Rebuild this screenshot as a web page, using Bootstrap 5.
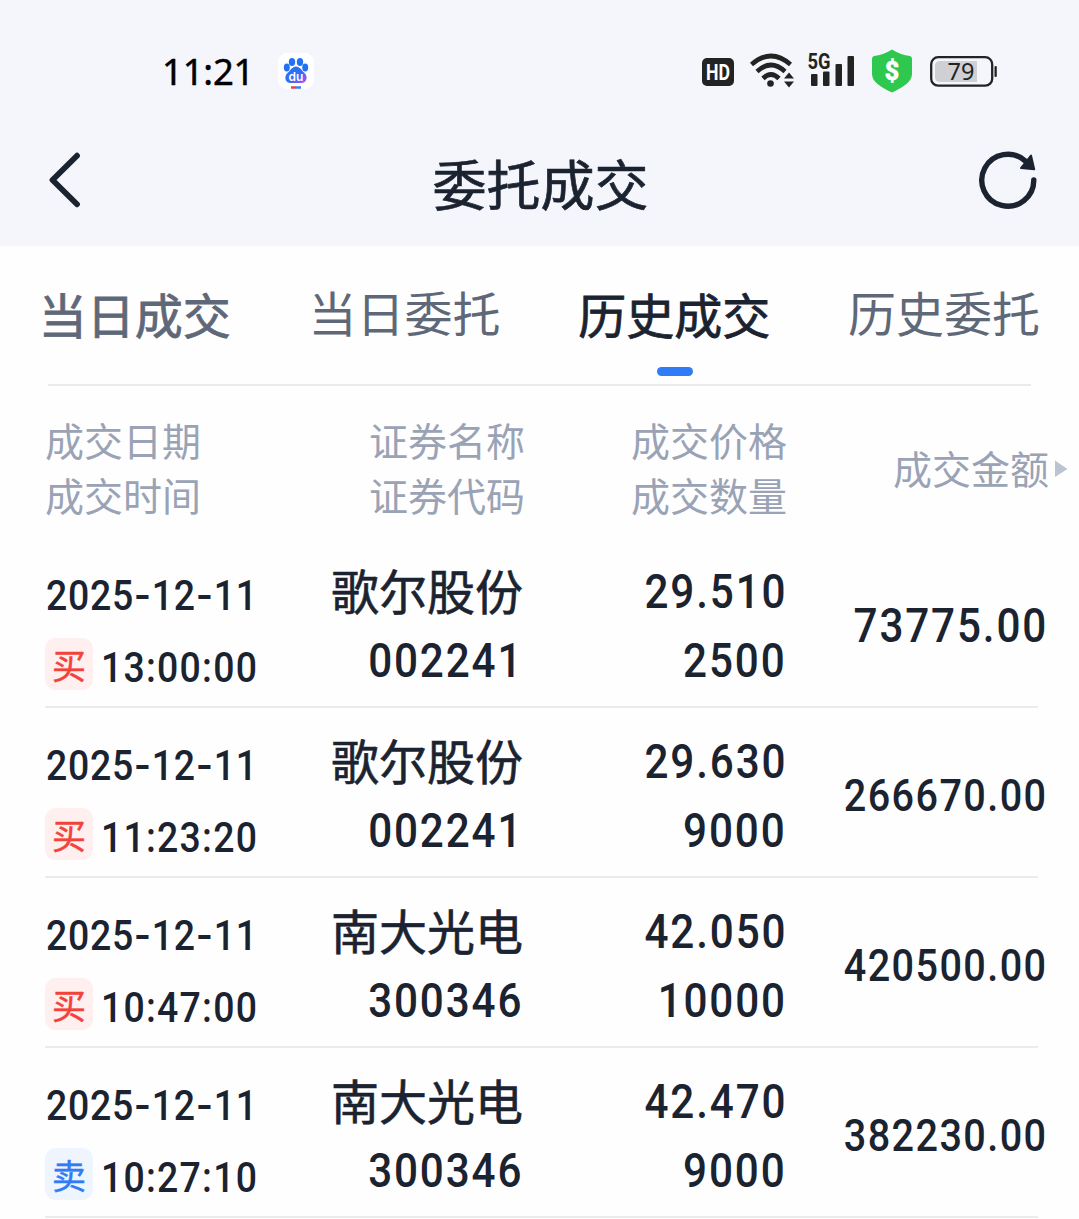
<!DOCTYPE html>
<html lang="zh-CN">
<head>
<meta charset="utf-8">
<meta name="viewport" content="width=device-width, initial-scale=1">
<title>委托成交</title>
<link href="https://cdn.jsdelivr.net/npm/bootstrap@5.3.0/dist/css/bootstrap.min.css" rel="stylesheet">
<style>
body{font-family:Roboto,"Noto Sans CJK SC",sans-serif;color:#1b2330;background:#fefefe;overflow:hidden}
.cjk{font-family:"Noto Sans CJK SC",sans-serif}
.topzone{background:#f4f6fb;height:246px}
.statusbar{height:120px;padding:22px 81px 0 162px}
.clock{font:400 36.5px/1 "Noto Sans",sans-serif;color:#000;letter-spacing:-.2px;width:116px;-webkit-text-stroke:.5px}
.appbar{height:126px;padding:0 41px 6px 48px}
.apptitle{font-size:54px;line-height:60px;font-weight:400;-webkit-text-stroke:.7px;padding-top:5px;margin-right:3px}
.tabs{height:140px}
.tabs .nav-link{height:138px;padding:31px 0 0;font-size:48px;line-height:68px;color:#5f6878;font-weight:400;white-space:nowrap}
.tabs .strong{padding-top:33px;-webkit-text-stroke:.8px}
.tabs .active{color:#1b2330}
.pill{width:36px;height:9px;border-radius:5px;background:#2f7cf6;margin:20px auto 0;position:relative;left:.5px}
.rule{height:2px;background:#ebebec}
.trade{display:grid;grid-template-columns:215px 263px 262px 261px;margin-left:45px;width:1001px}
.heads{grid-template-columns:217px 263px 262px 281px;width:1023px;height:152px;color:#9aa3b5;font-size:39px;line-height:55px;padding-top:26px}
.deal{height:168px}
.num{display:inline-block;font-weight:500;transform:scaleX(.88);transform-origin:100% 50%;white-space:nowrap;letter-spacing:2.1px;margin-right:-2px;font-size:48px;line-height:68px}
.dt{font-size:42.5px;transform-origin:0 50%;letter-spacing:.8px;line-height:72px}
.date{margin-left:1px}
.time{letter-spacing:1.4px}
.dt i{font-style:normal;font-family:Inter}
.vals{padding-top:20px;line-height:0}
.names{padding-top:17px}
.stock{font-size:48px;line-height:68px;-webkit-text-stroke:.6px}
.code{margin:4px 0 0}
.deal .qty{margin-top:1px}
.total{margin-top:7px}
.longnum{font-size:45px;letter-spacing:1.6px}
.dates{padding-top:21px}
.side{width:48px;height:52px;border-radius:11px;font-size:34px;line-height:53px;-webkit-text-stroke:.5px;margin-bottom:9px}
.buy{background:#ffefef;color:#f3413b}
.sell{background:#eff5ff;color:#2f7cf6}
.deal-rule{margin:0 41px 0 45px}
</style>
<script src="https://cdn.jsdelivr.net/npm/bootstrap@5.3.0/dist/js/bootstrap.bundle.min.js"></script>
</head>
<body>
<header class="topzone">
  <div class="statusbar d-flex align-items-center">
    <span class="clock">11:21</span>
    <svg width="36" height="36" viewBox="0 0 36 36"><defs><linearGradient id="paw" x1="0" y1="0" x2="1" y2="1"><stop offset="0" stop-color="#1976f5"/><stop offset=".6" stop-color="#3a6af5"/><stop offset="1" stop-color="#c44cf0"/></linearGradient></defs><rect width="36" height="36" rx="9" fill="#fff"/><g fill="#2472f0"><ellipse cx="8.800" cy="14.500" rx="3" ry="3.900"/><ellipse cx="14" cy="9" rx="3.200" ry="4"/><ellipse cx="22" cy="9" rx="3.200" ry="4"/><ellipse cx="27.200" cy="14.500" rx="3" ry="3.900"/></g><path d="M18 13.500c4 0 5.500 4 8.500 6.500c4 4 2 10-3 10H12.500c-5 0-7-6-3-10c3-2.500 4.500-6.500 8.500-6.500Z" fill="url(#paw)"/><text x="18" y="27.500" text-anchor="middle" font-family="Inter" font-weight="600" font-size="12" fill="#fff">du</text><path d="M13 34.500h5" stroke="#e8443f" stroke-width="2.500"/><path d="M18 34.500h5" stroke="#3a80ee" stroke-width="2.500"/></svg>
    <svg class="ms-auto" width="296" height="46" viewBox="702 48 296 46"><rect x="702" y="58" width="32" height="28" rx="5" fill="#222423"/><text x="718" y="80" text-anchor="middle" textLength="24" lengthAdjust="spacingAndGlyphs" font-family="Roboto" font-weight="700" font-size="22.500" fill="#fff">HD</text><g fill="none" stroke="#222423" stroke-width="4.600"><path d="M751.500 64.500Q771 47.500 790.500 64.500"/><path d="M757 71.500Q771 58.500 785 71.500"/><path d="M763 78.500Q771 70.500 779 78.500"/></g><circle cx="770.500" cy="83.500" r="3.300" fill="#222423"/><path d="M784 78.500l5-6 5 6ZM784 81.500h10l-5 6Z" fill="#222423"/><text x="807.500" y="69" textLength="23" lengthAdjust="spacingAndGlyphs" font-family="Roboto" font-weight="700" font-size="21.500" fill="#222423">5G</text><g fill="#222423"><rect x="811" y="74" width="6.500" height="12" rx="1"/><rect x="823" y="71.500" width="6.500" height="14.500" rx="1"/><rect x="835.500" y="64" width="6.500" height="22" rx="1"/><rect x="847.500" y="56" width="6.500" height="30" rx="1"/></g><path d="M892 49.500c6 4 12 5.500 18 6.500q2 .5 2 3v15c0 8-10 14-20 18.500c-10-4.500-20-10.500-20-18.500v-15q0-2.500 2-3c6-1 12-2.500 18-6.500Z" fill="#2fc84e"/><text x="892" y="80" text-anchor="middle" font-family="Roboto" font-weight="800" font-size="25" fill="#fff" stroke="#fff" stroke-width=".6">$</text><rect x="931.200" y="57.200" width="61" height="28.500" rx="7" fill="none" stroke="#222423" stroke-width="2.300"/><path d="M940 61h37v21h-37q-5 0-5-5V66q0-5 5-5Z" fill="#cfcfd4"/><rect x="994.500" y="66" width="2.300" height="11" rx="1" fill="#222423"/><text x="961" y="80" text-anchor="middle" font-family="Noto Sans" font-size="23.500" fill="#222423">79</text></svg>
  </div>
  <div class="appbar d-flex align-items-center justify-content-between">
    <svg width="58" height="60" viewBox="48 150 58 60"><path d="M77 155.700L52.500 180L77 204.300" fill="none" stroke="#1b2330" stroke-width="5.800" stroke-linecap="round" stroke-linejoin="round"/></svg>
    <h1 class="apptitle cjk mb-0">委托成交</h1>
    <svg width="60" height="60" viewBox="978 150 60 60"><path d="M1033.800 180a26 26 0 1 1-8.500-19" fill="none" stroke="#1b2330" stroke-width="5.400" stroke-linecap="round"/><path d="M1031 155.500l3.200 13.700-13.200-1.200Z" fill="#1b2330" stroke="#1b2330" stroke-width="2" stroke-linejoin="round"/></svg>
  </div>
</header>
<nav class="tabs cjk">
  <div class="nav row g-0 text-center">
    <a class="nav-link col-3 strong">当日成交</a>
    <a class="nav-link col-3">当日委托</a>
    <a class="nav-link col-3 strong active">历史成交<div class="pill"></div></a>
    <a class="nav-link col-3">历史委托</a>
  </div>
  <div class="rule mx-5"></div>
</nav>
<main>
  <div class="trade heads cjk">
    <div>成交日期<br>成交时间</div>
    <div class="text-end">证券名称<br>证券代码</div>
    <div class="text-end">成交价格<br>成交数量</div>
    <div class="d-flex align-items-center justify-content-end text-nowrap" style="height:110px">成交金额<svg class="flex-shrink-0" width="19" height="20" viewBox="0 0 19 20"><path d="M6 3.500L18.500 12L6 20Z" fill="#bcc3d1"/></svg></div>
  </div>
  <div id="deals"></div>
</main>
<template id="row">
  <section>
    <div class="trade deal">
      <div class="dates d-flex flex-column"><span class="num dt date"></span><div class="d-flex align-items-center"><span class="side cjk text-center flex-shrink-0"></span><span class="num dt time ms-2"></span></div></div>
      <div class="text-end names"><div class="stock cjk"></div><span class="num code"></span></div>
      <div class="text-end vals"><span class="num price"></span><br><span class="num qty"></span></div>
      <div class="d-flex align-items-center justify-content-end"><span class="num total"></span></div>
    </div>
    <div class="rule deal-rule"></div>
  </section>
</template>
<script>
const deals=[
 ["买","13:00:00","歌尔股份","002241","29.510","2500","73775.00"],
 ["买","11:23:20","歌尔股份","002241","29.630","9000","266670.00"],
 ["买","10:47:00","南大光电","300346","42.050","10000","420500.00"],
 ["卖","10:27:10","南大光电","300346","42.470","9000","382230.00"]];
for(const [side,time,stock,code,price,qty,total] of deals){
  const r=document.getElementById("row").content.cloneNode(true),q=s=>r.querySelector(s);
  q(".date").innerHTML="2025<i>-</i>12<i>-</i>11";
  q(".side").textContent=side;q(".side").classList.add(side==="买"?"buy":"sell");
  q(".time").textContent=time;q(".stock").textContent=stock;q(".code").textContent=code;
  q(".price").textContent=price;q(".qty").textContent=qty;q(".total").textContent=total;
  if(total.length>8)q(".total").classList.add("longnum");
  document.getElementById("deals").append(r);
}
</script>
</body>
</html>
